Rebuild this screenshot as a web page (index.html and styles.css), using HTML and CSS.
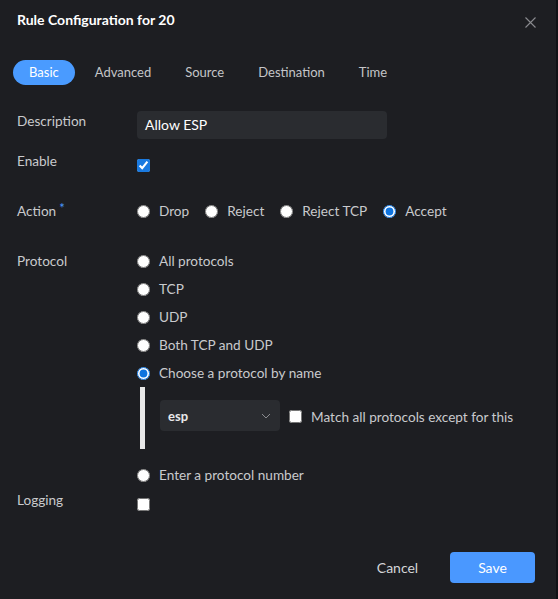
FILE: index.html
```html
<!DOCTYPE html>
<html>
<head>
<meta charset="utf-8">
<link rel="stylesheet" href="styles.css">
</head>
<body>
<div class="dialog">
  <div class="header">
    <div class="title">Rule Configuration for 20</div>
    <svg class="close" width="11" height="11" viewBox="0 0 11 11"><path d="M0.5 0.5L10.5 10.5M10.5 0.5L0.5 10.5" stroke="#8a8b8f" stroke-width="1.1" fill="none"/></svg>
  </div>
  <div class="tabs">
    <span class="tab active">Basic</span>
    <span class="tab">Advanced</span>
    <span class="tab">Source</span>
    <span class="tab">Destination</span>
    <span class="tab">Time</span>
  </div>
  <div class="form">
    <div class="row row-desc">
      <div class="label">Description</div>
      <div class="input">Allow ESP</div>
    </div>
    <div class="row row-enable">
      <div class="label">Enable</div>
      <input type="checkbox" class="cb cb-enable" checked>
    </div>
    <div class="row row-action">
      <div class="label">Action<span class="req">*</span></div>
      <div class="radios-inline">
        <label class="ri"><input type="radio" name="a"> Drop</label>
        <label class="ri"><input type="radio" name="a"> Reject</label>
        <label class="ri"><input type="radio" name="a"> Reject TCP</label>
        <label class="ri"><input type="radio" name="a" checked> Accept</label>
      </div>
    </div>
    <div class="row row-proto">
      <div class="label label-proto">Protocol</div>
      <div class="radios-col">
        <label class="rc"><input type="radio" name="p"> All protocols</label>
        <label class="rc"><input type="radio" name="p"> TCP</label>
        <label class="rc"><input type="radio" name="p"> UDP</label>
        <label class="rc"><input type="radio" name="p"> Both TCP and UDP</label>
        <label class="rc"><input type="radio" name="p" checked> Choose a protocol by name</label>
        <div class="sub">
          <div class="select">
            <span>esp</span>
            <svg width="10" height="6" viewBox="0 0 10 6"><path d="M1 1L5 5L9 1" stroke="#8a8b8f" stroke-width="1" fill="none"/></svg>
          </div>
          <label class="match"><input type="checkbox" class="cb"> Match all protocols except for this</label>
        </div>
        <label class="rc"><input type="radio" name="p"> Enter a protocol number</label>
      </div>
    </div>
    <div class="row row-log">
      <div class="label">Logging</div>
      <input type="checkbox" class="cb cb-log">
    </div>
  </div>
  <div class="footer">
    <button class="btn cancel">Cancel</button>
    <button class="btn save">Save</button>
  </div>
</div>
</body>
</html>
```
FILE: styles.css
```css
html, body {
  margin: 0;
  padding: 0;
  background: #101115;
}
body {
  font-family: Lato, "Liberation Sans", sans-serif;
  font-size: 13.6px;
  color: #c9cacd;
}
.dialog {
  width: 556px;
  height: 599px;
  background: #1d1e22;
  box-sizing: border-box;
  display: flex;
  flex-direction: column;
}
.header {
  display: flex;
  justify-content: space-between;
  align-items: center;
  padding: 10px 20px 0 17px;
  height: 20px;
}
.title {
  color: #ffffff;
  font-weight: 700;
  font-size: 14px;
  line-height: 20px;
}
.close {
  margin-top: 4px;
}
.tabs {
  display: flex;
  align-items: center;
  margin-top: 30px;
  padding-left: 13px;
}
.tab {
  height: 25px;
  line-height: 25px;
  padding: 0 15px;
  margin-right: 4px;
  border-radius: 13px;
  color: #c4c5c8;
  font-size: 13px;
}
.tab.active {
  background: #4a9bff;
  color: #ffffff;
  padding: 0 16px;
  margin-right: 5px;
}
.form {
  padding-left: 17px;
  margin-top: 26px;
}
.row {
  display: flex;
  align-items: flex-start;
}
.label {
  width: 120px;
  flex-shrink: 0;
  line-height: 20px;
}
.req {
  color: #4a9bff;
  font-size: 13px;
  vertical-align: top;
  line-height: 14px;
  margin-left: 3px;
}
.input {
  width: 242px;
  height: 28px;
  line-height: 28px;
  padding-left: 8px;
  background: #2a2c30;
  border-radius: 4px;
  color: #ffffff;
  font-size: 14px;
}
.row-enable {
  margin-top: 12px;
}
input {
  margin: 0;
}
.cb {
  width: 13px;
  height: 13px;
  accent-color: #1a7ae0;
}
.cb-enable {
  margin-top: 8px;
}
.row-action {
  margin-top: 29px;
}
.radios-inline {
  display: flex;
  align-items: center;
  height: 20px;
}
.ri {
  display: flex;
  align-items: center;
  gap: 9px;
  margin-right: 16px;
  color: #c9cacd;
}
input[type=radio] {
  width: 13px;
  height: 13px;
  accent-color: #0f74df;
}
.row-proto {
  margin-top: 30px;
}
.radios-col {
  display: flex;
  flex-direction: column;
  margin-top: -4px;
}
.rc {
  display: flex;
  align-items: center;
  gap: 9px;
  height: 28px;
}
.sub {
  display: flex;
  align-items: flex-start;
  border-left: 5px solid #e8e8e8;
  margin-left: 3px;
  height: 62px;
  padding-left: 15px;
  margin-bottom: 12px;
  box-sizing: border-box;
}
.select {
  margin-top: 13px;
  width: 120px;
  height: 31px;
  background: #2a2c30;
  border-radius: 4px;
  display: flex;
  align-items: center;
  justify-content: space-between;
  padding: 0 9px 0 8px;
  box-sizing: border-box;
  color: #e8e8ea;
  font-weight: 700;
  font-size: 13px;
}
.match {
  display: flex;
  align-items: center;
  gap: 9px;
  margin-left: 9px;
  margin-top: 23px;
  height: 13px;
  font-size: 13.6px;
}
.row-log {
  margin-top: 1px;
}
.cb-log {
  margin-top: 8px;
}
.footer {
  display: flex;
  justify-content: flex-end;
  gap: 10px;
  padding-right: 21px;
  margin-top: auto;
  margin-bottom: 16px;
}
.btn {
  width: 85px;
  height: 31px;
  border: none;
  border-radius: 4px;
  font-family: Lato, "Liberation Sans", sans-serif;
  font-size: 14px;
  cursor: pointer;
}
.cancel {
  background: transparent;
  color: #d4d5d8;
}
.save {
  background: #4a98ff;
  color: #ffffff;
}
```
